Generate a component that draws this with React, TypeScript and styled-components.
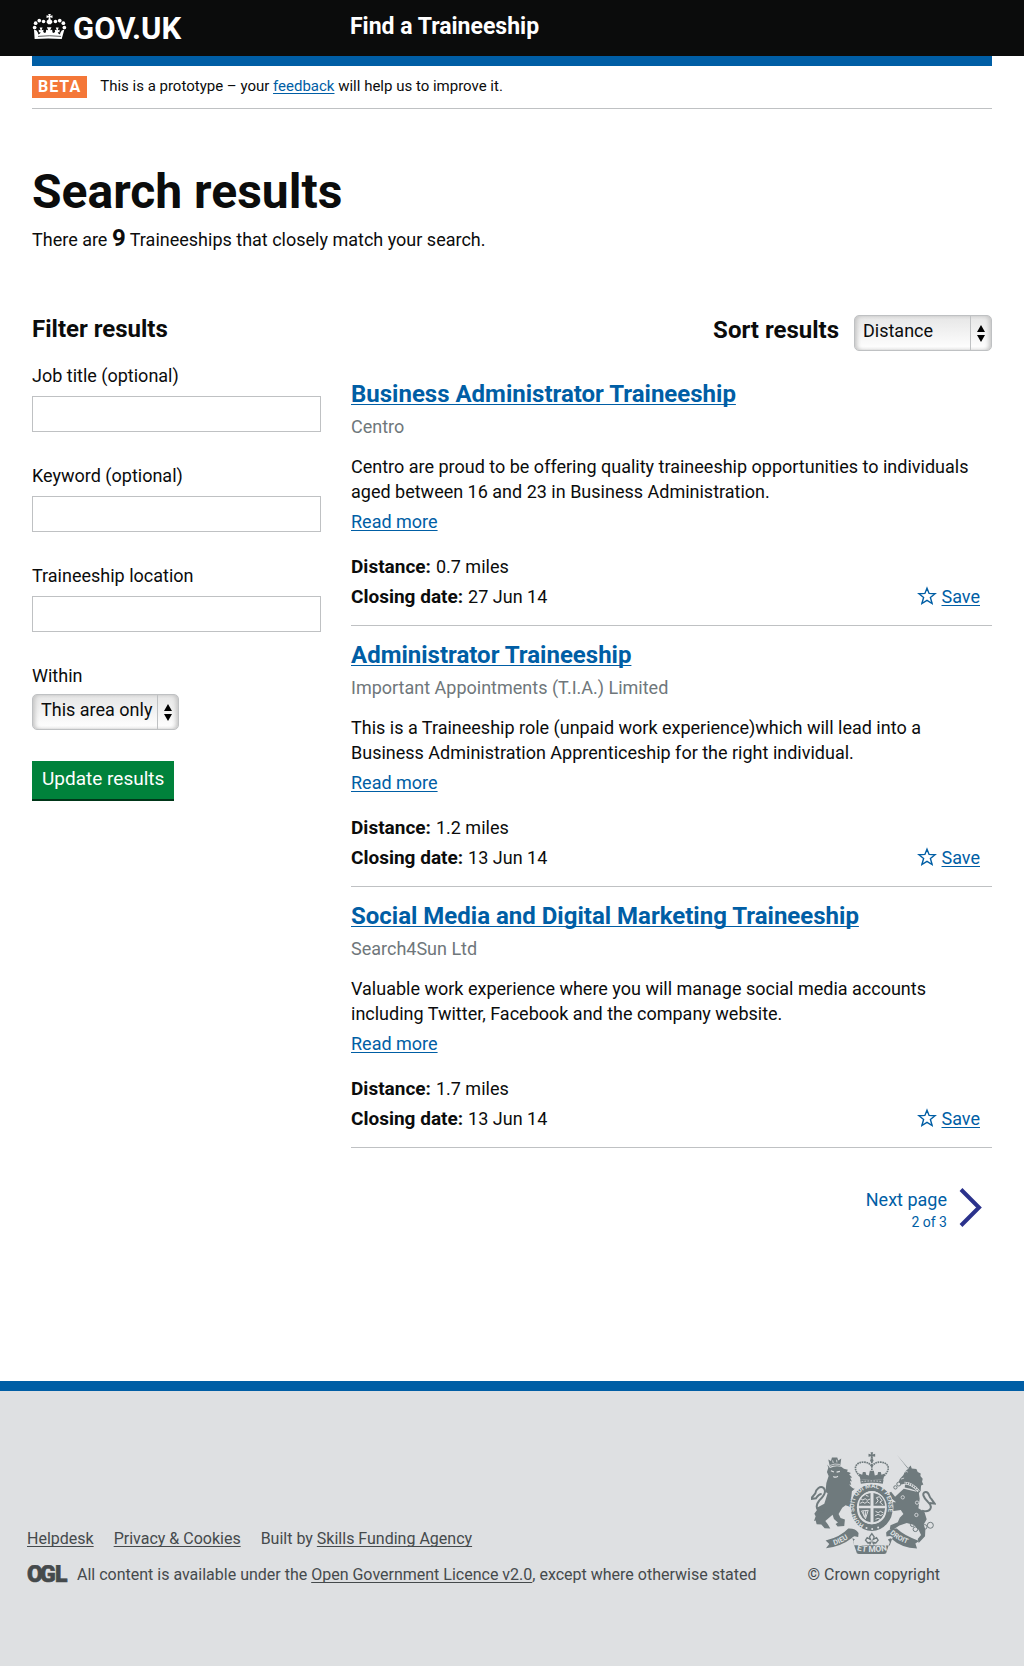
import React from "react";
import styled, { createGlobalStyle } from "styled-components";

const color = {
  ink: "#0b0c0c",
  link: "#005ea5",
  line: "#bfc1c3",
  muted: "#6f777b",
  footer: "#dee0e2",
  footerText: "#454a4c",
  green: "#00823b",
  greenEdge: "#003618",
  orange: "#f47738",
  white: "#ffffff",
};

const GlobalStyle = createGlobalStyle`
  *, *::before, *::after { box-sizing: border-box; }
  body {
    margin: 0;
    background: ${color.footer};
    color: ${color.ink};
    font-family: Roboto, "Liberation Sans", sans-serif;
    font-size: 18px;
    line-height: 25px;
  }
  h1, h2, p, ul, dl, dd { margin: 0; padding: 0; }
  ul { list-style: none; }
  button, input, select { font: inherit; color: inherit; }
`;

const Link = styled.a`
  color: ${color.link};
  text-decoration: underline;
  text-decoration-thickness: 1px;
  text-underline-offset: 2px;
  text-decoration-skip-ink: none;
`;

/* ---------- header ---------- */

const Header = styled.header`
  background: ${color.ink};
  color: ${color.white};
`;

const HeaderInner = styled.div`
  display: grid;
  grid-template-columns: 288fr 642fr;
  column-gap: 30px;
  max-width: 1024px;
  min-height: 56px;
  margin: 0 auto;
  padding: 0 32px;
  @media (max-width: 700px) {
    grid-template-columns: 1fr;
    padding: 0 16px 10px;
  }
`;

const LogoLink = styled.a`
  display: flex;
  align-items: flex-start;
  gap: 6px;
  padding-top: 11px;
  color: ${color.white};
  font-size: 31px;
  font-weight: 700;
  line-height: 35px;
  text-decoration: none;
  svg { margin-top: 2px; }
`;

const ServiceName = styled.a`
  padding-top: 12px;
  color: ${color.white};
  font-size: 23px;
  font-weight: 700;
  line-height: 30px;
  text-decoration: none;
`;

/* ---------- page ---------- */

const Page = styled.main`
  background: ${color.white};
  padding-bottom: 149px;
`;

const Container = styled.div`
  max-width: 1024px;
  margin: 0 auto;
  padding: 0 32px;
  @media (max-width: 700px) { padding: 0 16px; }
`;

const PhaseBanner = styled.div`
  display: flex;
  align-items: flex-start;
  gap: 13px;
  padding: 10px 0;
  border-top: 10px solid ${color.link};
  border-bottom: 1px solid ${color.line};
  font-size: 15px;
  line-height: 20px;
`;

const PhaseTag = styled.strong`
  padding: 1px 6px;
  background: ${color.orange};
  color: ${color.white};
  font-size: 16px;
  letter-spacing: 1px;
`;

const PageTitle = styled.h1`
  margin-top: 58px;
  font-size: 48px;
  line-height: 50px;
`;

const Summary = styled.p`
  margin-top: 6px;
  line-height: 30px;
`;

const Count = styled.strong`
  font-size: 24px;
`;

const Columns = styled.div`
  display: grid;
  grid-template-columns: 289fr 641fr;
  column-gap: 30px;
  align-items: start;
  margin-top: 59px;
  @media (max-width: 700px) {
    grid-template-columns: 1fr;
    row-gap: 40px;
  }
`;

/* ---------- filters ---------- */

const FilterForm = styled.form`
  display: flex;
  flex-direction: column;
  align-items: flex-start;
`;

const SectionTitle = styled.h2`
  margin-bottom: 19px;
  font-size: 24px;
  line-height: 30px;
`;

const Field = styled.div<{ $gap?: number }>`
  display: flex;
  flex-direction: column;
  align-items: flex-start;
  gap: ${(p) => p.$gap ?? 8}px;
  width: 100%;
  margin-bottom: 31px;
`;

const TextInput = styled.input`
  width: 100%;
  height: 36px;
  padding: 0 8px;
  border: 1px solid ${color.line};
  border-radius: 0;
  background: ${color.white};
`;

const SelectWrap = styled.div<{ $width: number }>`
  position: relative;
  width: ${(p) => p.$width}px;
  height: 36px;
`;

const SelectBox = styled.select`
  appearance: none;
  width: 100%;
  height: 36px;
  padding: 0 24px 6px 8px;
  border: 1px solid ${color.line};
  border-radius: 5px;
  background: linear-gradient(#e6e6e6, #ffffff);
  box-shadow: inset 3px 0 4px -1px #c4c4c4, inset -3px 0 4px -1px #c4c4c4;
`;

const SelectArrows = styled.span`
  position: absolute;
  top: 1px;
  right: 1px;
  bottom: 1px;
  display: grid;
  place-items: center;
  width: 21px;
  border-left: 1px solid ${color.line};
  pointer-events: none;
`;

const SubmitButton = styled.button`
  height: 40px;
  padding: 0 10px 2px;
  border: 0;
  border-bottom: 2px solid ${color.greenEdge};
  background: ${color.green};
  color: ${color.white};
  font-size: 19px;
  line-height: 30px;
`;

/* ---------- results ---------- */

const SortRow = styled.div`
  display: flex;
  justify-content: flex-end;
  gap: 15px;
  padding-top: 1px;
  margin-bottom: 14px;
`;

const SortLabel = styled.label`
  font-size: 24px;
  font-weight: 700;
  line-height: 30px;
`;

const Result = styled.li`
  padding: 14px 0 16px;
  border-bottom: 1px solid ${color.line};
`;

const ResultTitle = styled.h2`
  font-size: 24px;
  line-height: 30px;
`;

const Employer = styled.p`
  margin: 5px 0 15px;
  color: ${color.muted};
`;

const ReadMore = styled.p`
  margin: 5px 0 20px;
`;

const Facts = styled.div`
  display: flex;
  justify-content: space-between;
  align-items: flex-end;
`;

const FactList = styled.dl`
  display: grid;
  row-gap: 5px;
`;

const Fact = styled.div`
  display: flex;
  align-items: baseline;
  gap: 5px;
  dt { font-size: 19px; font-weight: 700; }
`;

const SaveLink = styled.span`
  display: flex;
  gap: 5px;
  padding-right: 12px;
  svg { margin-top: 2px; }
`;

const NextLink = styled.a`
  display: flex;
  justify-content: flex-end;
  gap: 12px;
  margin-top: 39px;
  padding-right: 9px;
  color: ${color.link};
  text-align: right;
  text-decoration: none;
`;

const NextText = styled.span`
  display: flex;
  flex-direction: column;
  small { font-size: 14px; line-height: 20px; }
`;

/* ---------- footer ---------- */

const Footer = styled.footer`
  border-top: 10px solid ${color.link};
  background: ${color.footer};
  color: ${color.footerText};
  font-size: 16px;
  line-height: 20px;
`;

const FooterInner = styled.div`
  display: flex;
  flex-wrap: wrap;
  justify-content: space-between;
  align-items: flex-end;
  gap: 30px;
  max-width: 1024px;
  margin: 0 auto;
  padding: 61px 84px 81px 27px;
  @media (max-width: 700px) { padding: 40px 16px; }
`;

const FooterLinks = styled.ul`
  display: flex;
  flex-wrap: wrap;
  gap: 5px 20px;
  margin-bottom: 16px;
`;

const FooterLink = styled(Link)`
  color: ${color.footerText};
`;

const Licence = styled.div`
  display: flex;
  gap: 6px;
  svg { flex: none; }
`;

const Copyright = styled.a`
  display: flex;
  flex-direction: column;
  align-items: center;
  gap: 11px;
  color: ${color.footerText};
  text-decoration: none;
`;

/* ---------- drawings ---------- */

const CrownIcon = () => (
  <svg width="35" height="27" viewBox="36 24 106 80" fill="#fff" aria-hidden="true">
    <circle cx="44" cy="67" r="5.6" /><circle cx="47" cy="54" r="5.6" />
    <circle cx="58" cy="46" r="5.6" /><circle cx="71" cy="49" r="5.4" />
    <circle cx="134" cy="67" r="5.6" /><circle cx="131" cy="54" r="5.6" />
    <circle cx="120" cy="46" r="5.6" /><circle cx="107" cy="49" r="5.4" />
    <path d="M85 26h8l-2 6 7-2v8l-7-2 1 7q6 2 6 8l-5 6h-8l-5-6q0-6 6-8l1-7-7 2v-8l7 2z" />
    <path d="M42 73l8 3q5 7 5 12 7-1 7-7l-5 1-1-8 6 1-3-8h9l-3 8 6-1-1 7q5 5 9 0l-1-1 1-6 6 1-4-9h14l-4 9 6-1 1 6-1 1q4 5 9 0l-1-7 6 1-3-8h9l-3 8 6-1-1 8-5-1q0 6 7 7 0-5 5-12l8-3-8 29q-41-4-82 0z" />
    <path d="M54 94q35-4 70 0" fill="none" stroke="#0b0c0c" strokeWidth="2" />
  </svg>
);

const ArrowsIcon = () => (
  <svg width="8" height="17" viewBox="0 0 8 17" aria-hidden="true">
    <path d="M4 0l4 7H0zM4 17l4-7H0z" fill="#000" />
  </svg>
);

const StarIcon = () => (
  <svg width="20" height="20" viewBox="0 0 20 20" aria-hidden="true">
    <path d="M10 2.2l2.1 5.2 6 .3-4.7 3.8 1.7 6-5.1-3.2-5.1 3.2 1.7-6-4.7-3.8 6-.3z" fill="none" stroke={color.link} strokeWidth="1.4" />
  </svg>
);

const NextIcon = () => (
  <svg width="24" height="41" viewBox="0 0 24 41" aria-hidden="true">
    <path d="M2 2.5l18 18-18 18" fill="none" stroke="#2b328c" strokeWidth="4" />
  </svg>
);

const OglMark = () => (
  <svg width="44" height="20" viewBox="0 0 44 20" role="img" aria-label="OGL">
    <text x="0 13 28" y="17" fontFamily="Roboto, sans-serif" fontWeight="900" fontSize="23" fill={color.footerText} stroke={color.footerText} strokeWidth="0.6">OGL</text>
  </svg>
);

const Crest = () => {
  const g = "#6f7a7d";
  const bg = color.footer;
  return (
    <svg width="125" height="102" viewBox="36 36 376 306" fill={g} fontFamily="Roboto, sans-serif" fontWeight="700" aria-hidden="true">
      {/* imperial crown */}
      <path d="M215 36h8l-2 7 8-2v9l-8-2 2 8h-8l2-8-8 2v-9l8 2z" />
      <circle cx="219" cy="61" r="5" />
      <path d="M183 108C158 84 172 66 194 66q16 0 25 13 9-13 25-13c22 0 36 18 11 42" fill="none" stroke={g} strokeWidth="5" strokeDasharray="5 2" />
      <path d="M219 64v28" stroke={g} strokeWidth="5" strokeDasharray="5 2" />
      <path d="M180 100l10 4 2-8h8l2 8 8 2 3-14h12l3 14 8-2 2-8h8l2 8 10-4-5 20q-34-6-68 0z" />
      <path d="M184 120q35-7 70 0l-2 11q-33-6-66 0z" />
      <path d="M188 125q31-5 62 0" fill="none" stroke={bg} strokeWidth="2.5" strokeDasharray="5 4" />
      {/* lion */}
      <path d="M88 58l8 5 3-11h16l3 9 9-6-3 22q-16-3-31 3z" />
      <path d="M93 76q15-7 30-3M101 61l2 8M113 59l1 8" fill="none" stroke={bg} strokeWidth="2.5" />
      <path d="M93 84q16-9 34-4l8 6 12 3-3 5 12 5-5 4 9 9-6 1 5 11-6-1 4 11-6-1q8 12 17 13l-9 8-2 20 7 9-4 6 8 11-2 16-11-2 2-12-17-6-10 7-11 19 6 12 13 5-2 19-20 2-6-8 7-4-12-11-4-13-22 19 8 11 7 12-17-1-10-11-14-1-3-11-5 1 5-14-4-8 8-11-2-6 24-13 10-31-6-4q-1-25 9-48l-5-12 4-13-3-10z" />
      <path d="M96 92l9 4M113 96l10-2M103 109q8 5 14-1" stroke={bg} strokeWidth="3.5" fill="none" />
      <path d="M78 212c-20 9-33-11-18-29 12-14 25-27 14-39-10-9-23 3-25 16l-14 17 16-2q8-13 17-13" fill="none" stroke={g} strokeWidth="6" />
      {/* unicorn */}
      <path d="M294 44l33 41 9-9 3 9 14 2 4 9 9 4-1 8 7 8-2 9 4 8-7 3-1 16-10 13-4-13q-17-8-34-10l1-12-11 3-8-8 3-8 11-12q4-14 16-19z" />
      <path d="M319 96q4-4 8 0M307 117l9-3M295 49l25 32" stroke={bg} strokeWidth="2.5" fill="none" />
      <path d="M317 129q24 0 43 25" fill="none" stroke={bg} strokeWidth="8" />
      <path d="M317 129q24 0 43 25" fill="none" stroke={g} strokeWidth="4" strokeDasharray="4 3" />
      <path d="M315 146l45 11 3 19-4 29 18 10 7 23-9 16 5 15-1 20-19 20-3-12 10-12-7-15-14-15-22-6-22 8-21 13-8-2 2-12 22-9 6-14 11-11-8-12-21 3-16-9-8-16-9 1-3-11-9-6 13-5 14 5 8 14 17 1-18-15-6-12 9-5 12 15z" />
      <path d="M370 212c26 8 34-12 18-26-14-13-20-28-7-30 12-1 8 15 17 21l10 14-15-2" fill="none" stroke={g} strokeWidth="6" />
      <g fill="none" stroke={g} strokeWidth="3">
        <circle cx="300" cy="132" r="6" /><circle cx="290" cy="142" r="5" />
        <circle cx="341" cy="254" r="6" /><circle cx="350" cy="268" r="7" />
        <circle cx="378" cy="261" r="7" /><circle cx="395" cy="256" r="9" />
      </g>
      <g fill="none" stroke={bg} strokeWidth="2.5">
        <circle cx="312" cy="172" r="5" /><circle cx="355" cy="188" r="5" /><circle cx="353" cy="225" r="5" />
      </g>
      {/* garter and shield */}
      <ellipse cx="219" cy="203" rx="65" ry="72" fill={bg} />
      <ellipse cx="219" cy="203" rx="53" ry="60" fill="none" stroke={g} strokeWidth="20" />
      <path id="garter" d="M196 254C156 236 156 172 194 150c22-13 56-8 68 20 13 28 8 62-17 84" fill="none" />
      <text fontSize="19" fill={bg}><textPath href="#garter">HONI SOIT QUI MAL Y PENSE</textPath></text>
      <path d="M174 202a45 48 0 0 1 90 0q0 47-45 51-45-4-45-51z" fill={bg} />
      <path d="M180 197q3-33 35-38v38zM224 159q32 5 35 38h-35zM180 205h35v42q-32-6-35-42zM224 205h35q-3 36-35 42z" />
      <g fill="none" stroke={bg} strokeWidth="3">
        <path d="M185 176l7 4 7-4 6 5 9-4M184 190l8-4 6 4 7-5 8 5M201 166l8 3M231 191l7-9-5-9 9-3 8 12-7 4 9 9M188 213l20-2-8 25zM194 214l2 16M201 213l-2 19M230 214l8 4 7-4 9 5M229 227l9-4 8 4 6-4M230 238l8-3 6 3" />
      </g>
      <circle cx="203" cy="264" r="3" fill={bg} /><circle cx="220" cy="267" r="3" fill={bg} /><circle cx="238" cy="263" r="3" fill={bg} />
      {/* plant badge */}
      <path d="M219 281l7 10-3 8 10-6 5 8-7 8-9-2 4 10h-14l4-10-9 2-7-8 5-8 10 6-3-8z" fill="none" stroke={g} strokeWidth="4" />
      {/* ribbon */}
      <path d="M80 302q44-10 68-36 22-1 31 13l-1 12-11-2-7 3 6 24 107 1 9-26-8-3-11 2-1-12q10-13 32-12 23 22 67 37l-11 8 5 15q-46-1-79-31l-9 4 6 7-11 34q-44 18-88 0l-12-35 6-7-9-4q-31 25-78 31l10-13z" />
      <path d="M164 310q54 10 108 0" fill="none" stroke={bg} strokeWidth="2" />
      <path id="ribbon-left" d="M106 316q28-8 56-30" fill="none" />
      <path id="ribbon-mid" d="M174 331q44 11 92 0" fill="none" />
      <path id="ribbon-right" d="M273 281q28 24 68 36" fill="none" />
      <text fontSize="22" fill={bg}><textPath href="#ribbon-left">DIEU</textPath></text>
      <text fontSize="25" fill={bg}><textPath href="#ribbon-mid">ET MON</textPath></text>
      <text fontSize="21" fill={bg}><textPath href="#ribbon-right">DROIT</textPath></text>
    </svg>
  );
};

/* ---------- composition ---------- */

const textFields = [
  { id: "job-title", label: "Job title (optional)" },
  { id: "keyword", label: "Keyword (optional)" },
  { id: "location", label: "Traineeship location" },
];

const results = [
  {
    title: "Business Administrator Traineeship",
    employer: "Centro",
    text: "Centro are proud to be offering quality traineeship opportunities to individuals aged between 16 and 23 in Business Administration.",
    distance: "0.7 miles",
    closing: "27 Jun 14",
  },
  {
    title: "Administrator Traineeship",
    employer: "Important Appointments (T.I.A.) Limited",
    text: "This is a Traineeship role (unpaid work experience)which will lead into a Business Administration Apprenticeship for the right individual.",
    distance: "1.2 miles",
    closing: "13 Jun 14",
  },
  {
    title: "Social Media and Digital Marketing Traineeship",
    employer: "Search4Sun Ltd",
    text: "Valuable work experience where you will manage social media accounts including Twitter, Facebook and the company website.",
    distance: "1.7 miles",
    closing: "13 Jun 14",
  },
];

function Select({ id, width, options }: { id: string; width: number; options: string[] }) {
  return (
    <SelectWrap $width={width}>
      <SelectBox id={id}>
        {options.map((o) => <option key={o}>{o}</option>)}
      </SelectBox>
      <SelectArrows><ArrowsIcon /></SelectArrows>
    </SelectWrap>
  );
}

export default function App() {
  return (
    <>
      <GlobalStyle />
      <Header>
        <HeaderInner>
          <LogoLink href="#"><CrownIcon />GOV.UK</LogoLink>
          <ServiceName href="#">Find a Traineeship</ServiceName>
        </HeaderInner>
      </Header>
      <Page>
        <Container>
          <PhaseBanner>
            <PhaseTag>BETA</PhaseTag>
            <p>This is a prototype – your <Link href="#">feedback</Link> will help us to improve it.</p>
          </PhaseBanner>
          <PageTitle>Search results</PageTitle>
          <Summary>There are <Count>9</Count> Traineeships that closely match your search.</Summary>
          <Columns>
            <FilterForm onSubmit={(e) => e.preventDefault()}>
              <SectionTitle>Filter results</SectionTitle>
              {textFields.map((f) => (
                <Field key={f.id}>
                  <label htmlFor={f.id}>{f.label}</label>
                  <TextInput id={f.id} type="text" />
                </Field>
              ))}
              <Field $gap={6}>
                <label htmlFor="within">Within</label>
                <Select id="within" width={147} options={["This area only"]} />
              </Field>
              <SubmitButton type="submit">Update results</SubmitButton>
            </FilterForm>
            <section>
              <SortRow>
                <SortLabel htmlFor="sort">Sort results</SortLabel>
                <Select id="sort" width={138} options={["Distance", "Closing date"]} />
              </SortRow>
              <ul>
                {results.map((r) => (
                  <Result key={r.title}>
                    <ResultTitle><Link href="#">{r.title}</Link></ResultTitle>
                    <Employer>{r.employer}</Employer>
                    <p>{r.text}</p>
                    <ReadMore><Link href="#">Read more</Link></ReadMore>
                    <Facts>
                      <FactList>
                        <Fact><dt>Distance:</dt><dd>{r.distance}</dd></Fact>
                        <Fact><dt>Closing date:</dt><dd>{r.closing}</dd></Fact>
                      </FactList>
                      <SaveLink><StarIcon /><Link href="#">Save</Link></SaveLink>
                    </Facts>
                  </Result>
                ))}
              </ul>
              <NextLink href="#">
                <NextText>Next page<small>2 of 3</small></NextText>
                <NextIcon />
              </NextLink>
            </section>
          </Columns>
        </Container>
      </Page>
      <Footer>
        <FooterInner>
          <div>
            <FooterLinks>
              <li><FooterLink href="#">Helpdesk</FooterLink></li>
              <li><FooterLink href="#">Privacy &amp; Cookies</FooterLink></li>
              <li>Built by <FooterLink href="#">Skills Funding Agency</FooterLink></li>
            </FooterLinks>
            <Licence>
              <OglMark />
              <p>All content is available under the <FooterLink href="#">Open Government Licence v2.0</FooterLink>, except where otherwise stated</p>
            </Licence>
          </div>
          <Copyright href="#"><Crest />© Crown copyright</Copyright>
        </FooterInner>
      </Footer>
    </>
  );
}
